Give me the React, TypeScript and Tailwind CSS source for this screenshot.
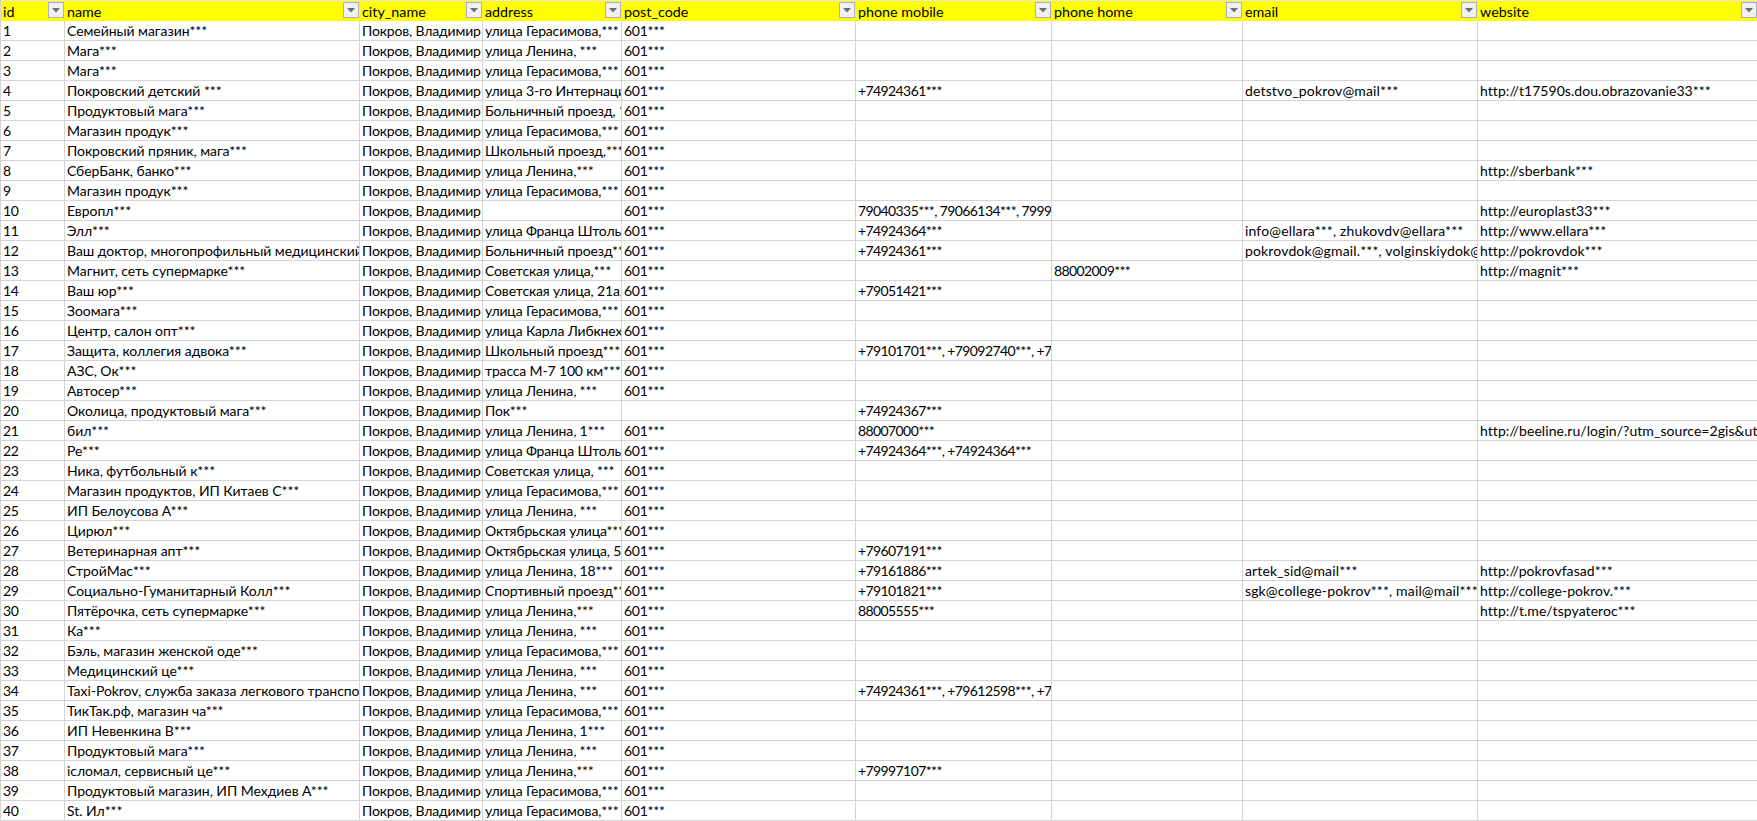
const columns = [
  { title: "id", width: 64, cell: "tracking-[-0.3px]" },
  { title: "name", width: 295, cell: "tracking-[-0.05px]" },
  { title: "city_name", width: 123, cell: "tracking-[-0.15px]" },
  { title: "address", width: 139, cell: "tracking-[-0.15px]" },
  { title: "post_code", width: 234, cell: "tracking-[-0.27px]" },
  { title: "phone mobile", width: 196, cell: "tracking-[-0.6px]" },
  { title: "phone home", width: 191, cell: "tracking-[-0.6px]" },
  { title: "email", width: 235, cell: "tracking-[0.15px]" },
  { title: "website", width: 280, cell: "tracking-[0.06px]" },
];

const CITY = "Покров, Владимир";
const POST = "601***";

// name, address, post_code, mobile, home, email, website
const rows: [string, string, string, string, string, string, string][] = [
  ["Семейный магазин***", "улица Герасимова,***", POST, "", "", "", ""],
  ["Мага***", "улица Ленина, ***", POST, "", "", "", ""],
  ["Мага***", "улица Герасимова,***", POST, "", "", "", ""],
  ["Покровский детский ***", "улица 3-го Интернационала", POST, "+74924361***", "", "detstvo_pokrov@mail***", "http://t17590s.dou.obrazovanie33***"],
  ["Продуктовый мага***", "Больничный проезд, ***", POST, "", "", "", ""],
  ["Магазин продук***", "улица Герасимова,***", POST, "", "", "", ""],
  ["Покровский пряник, мага***", "Школьный проезд,***", POST, "", "", "", ""],
  ["СберБанк, банко***", "улица Ленина,***", POST, "", "", "", "http://sberbank***"],
  ["Магазин продук***", "улица Герасимова,***", POST, "", "", "", ""],
  ["Европл***", "", POST, "79040335***, 79066134***, 7999***", "", "", "http://europlast33***"],
  ["Элл***", "улица Франца Штольверка", POST, "+74924364***", "", "info@ellara***, zhukovdv@ellara***", "http://www.ellara***"],
  ["Ваш доктор, многопрофильный медицинский центр", "Больничный проезд***", POST, "+74924361***", "", "pokrovdok@gmail.***, volginskiydok@mail", "http://pokrovdok***"],
  ["Магнит, сеть супермарке***", "Советская улица,***", POST, "", "88002009***", "", "http://magnit***"],
  ["Ваш юр***", "Советская улица, 21а,***", POST, "+79051421***", "", "", ""],
  ["Зоомага***", "улица Герасимова,***", POST, "", "", "", ""],
  ["Центр, салон опт***", "улица Карла Либкнехта", POST, "", "", "", ""],
  ["Защита, коллегия адвока***", "Школьный проезд***", POST, "+79101701***, +79092740***, +7***", "", "", ""],
  ["АЗС, Ок***", "трасса М-7 100 км***", POST, "", "", "", ""],
  ["Автосер***", "улица Ленина, ***", POST, "", "", "", ""],
  ["Околица, продуктовый мага***", "Пок***", "", "+74924367***", "", "", ""],
  ["бил***", "улица Ленина, 1***", POST, "88007000***", "", "", "http://beeline.ru/login/?utm_source=2gis&utm_medium"],
  ["Ре***", "улица Франца Штольверка", POST, "+74924364***, +74924364***", "", "", ""],
  ["Ника, футбольный к***", "Советская улица, ***", POST, "", "", "", ""],
  ["Магазин продуктов, ИП Китаев С***", "улица Герасимова,***", POST, "", "", "", ""],
  ["ИП Белоусова А***", "улица Ленина, ***", POST, "", "", "", ""],
  ["Цирюл***", "Октябрьская улица***", POST, "", "", "", ""],
  ["Ветеринарная апт***", "Октябрьская улица, 5***", POST, "+79607191***", "", "", ""],
  ["СтройМас***", "улица Ленина, 18***", POST, "+79161886***", "", "artek_sid@mail***", "http://pokrovfasad***"],
  ["Социально-Гуманитарный Колл***", "Спортивный проезд***", POST, "+79101821***", "", "sgk@college-pokrov***, mail@mail***", "http://college-pokrov.***"],
  ["Пятёрочка, сеть супермарке***", "улица Ленина,***", POST, "88005555***", "", "", "http://t.me/tspyateroc***"],
  ["Ка***", "улица Ленина, ***", POST, "", "", "", ""],
  ["Бэль, магазин женской оде***", "улица Герасимова,***", POST, "", "", "", ""],
  ["Медицинский це***", "улица Ленина, ***", POST, "", "", "", ""],
  ["Taxi-Pokrov, служба заказа легкового транспорта", "улица Ленина, ***", POST, "+74924361***, +79612598***, +7***", "", "", ""],
  ["ТикТак.рф, магазин ча***", "улица Герасимова,***", POST, "", "", "", ""],
  ["ИП Невенкина В***", "улица Ленина, 1***", POST, "", "", "", ""],
  ["Продуктовый мага***", "улица Ленина, ***", POST, "", "", "", ""],
  ["iсломал, сервисный це***", "улица Ленина,***", POST, "+79997107***", "", "", ""],
  ["Продуктовый магазин, ИП Мехдиев А***", "улица Герасимова,***", POST, "", "", "", ""],
  ["St. Ил***", "улица Герасимова,***", POST, "", "", "", ""],
];

function FilterButton() {
  return (
    <span className="absolute right-[1px] top-[1px] flex h-[16px] w-[16px] items-center justify-center border border-[#a9afc2] bg-[#f0f0f0]">
      <svg width="8" height="5" viewBox="0 0 8 5">
        <path d="M0 0h8L4 4.5z" fill="#6b6f78" />
      </svg>
    </span>
  );
}

export default function App() {
  const grid = columns.map((c) => c.width + "px").join(" ");
  return (
    <div className="h-[821px] w-[1757px] overflow-hidden border-l border-[#d4d4d4] bg-white font-['Lato','Liberation_Sans',sans-serif] text-[14px] leading-[19px] text-black">
      <div
        className="grid h-[21px] border-t border-[#e8e8e8] bg-[#ffff00]"
        style={{ gridTemplateColumns: grid }}
      >
        {columns.map((c) => (
          <div key={c.title} className="relative overflow-hidden pl-[2px] pt-[1px] text-[14.3px]">
            {c.title}
            <FilterButton />
          </div>
        ))}
      </div>
      {rows.map((row, i) => {
        const cells = [String(i + 1), row[0], CITY, row[1], row[2], row[3], row[4], row[5], row[6]];
        return (
          <div
            key={i}
            className="grid h-[20px] border-b border-[#d4d4d4]"
            style={{ gridTemplateColumns: grid }}
          >
            {cells.map((text, j) => (
              <div
                key={j}
                className={`overflow-hidden whitespace-nowrap border-r border-[#d4d4d4] pl-[2px] ${columns[j].cell}`}
              >
                {text}
              </div>
            ))}
          </div>
        );
      })}
    </div>
  );
}
